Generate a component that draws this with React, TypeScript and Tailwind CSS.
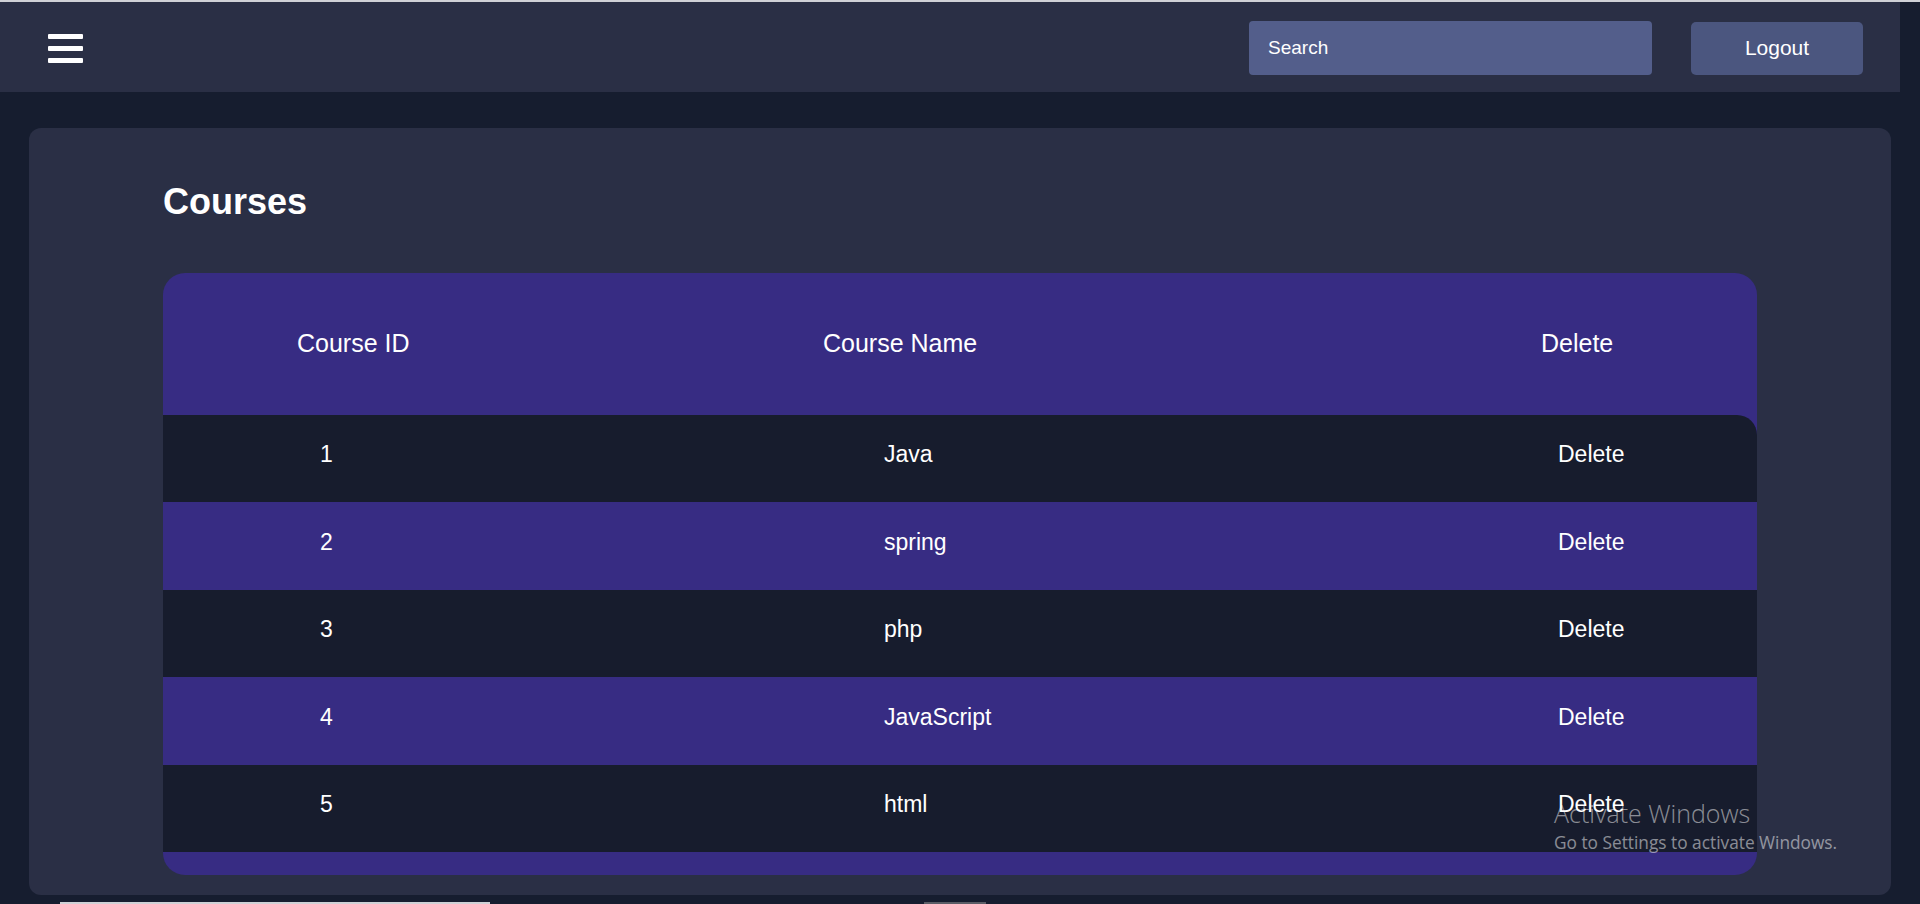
import React from 'react';

const courses = [
  { id: 1, name: 'Java' },
  { id: 2, name: 'spring' },
  { id: 3, name: 'php' },
  { id: 4, name: 'JavaScript' },
  { id: 5, name: 'html' },
];

function MenuIcon() {
  return (
    <svg width="35" height="29" viewBox="0 0 35 29" fill="#ffffff">
      <rect x="0" y="0" width="35" height="5" rx="1" />
      <rect x="0" y="12" width="35" height="5" rx="1" />
      <rect x="0" y="24" width="35" height="5" rx="1" />
    </svg>
  );
}

export default function App() {
  return (
    <div className="relative h-[904px] overflow-hidden bg-[#161d2f] font-['Liberation_Sans',Arial,sans-serif] text-white">
      {/* top edge */}
      <div className="h-[2px] bg-[#cfd1d6]" />

      {/* Navbar */}
      <header className="flex h-[90px] w-[1900px] items-center bg-[#2a2f45] pl-[48px] pr-[37px] pt-[2px]">
        <button className="flex items-center">
          <MenuIcon />
        </button>
        <input
          type="text"
          placeholder="Search"
          className="ml-auto h-[54px] w-[403px] rounded-[4px] bg-[#535e8b] pl-[19px] text-[19px] text-white placeholder:text-white focus:outline-none"
        />
        <button className="ml-[39px] h-[53px] w-[172px] rounded-[5px] bg-[#4b567f] text-[21px] text-white">
          Logout
        </button>
      </header>

      {/* Content card */}
      <main className="ml-[29px] mt-[36px] w-[1862px] rounded-xl bg-[#2a2f45] pb-[20px] pl-[134px] pt-[53px]">
        <h1 className="text-[36px] font-bold leading-[41px]">Courses</h1>

        <div className="mt-[51px] w-[1594px] overflow-hidden rounded-[22px] bg-[#372c83]">
          {/* head */}
          <div className="flex h-[142px] items-center pl-[134px] text-[25px]">
            <div className="w-[526px]">Course ID</div>
            <div className="w-[718px]">Course Name</div>
            <div>Delete</div>
          </div>

          {/* body */}
          {courses.map((c, i) => (
            <div
              key={c.id}
              className={
                'flex h-[87.4px] items-center pb-[8px] pl-[157px] text-[23px] ' +
                (i % 2 === 0 ? 'bg-[#171c2d] ' : 'bg-[#372c83] ') +
                (i === 0 ? 'rounded-tr-[20px]' : '')
              }
            >
              <div className="w-[564px]">{c.id}</div>
              <div className="w-[674px]">{c.name}</div>
              <button className="text-white">Delete</button>
            </div>
          ))}
          <div className="h-[23px]" />
        </div>
      </main>

      {/* scrollbar remnants */}
      <div className="mt-[7px] flex h-[2px]">
        <div className="ml-[60px] w-[430px] bg-[#cfd1d6]" />
        <div className="ml-[434px] w-[62px] bg-[#5a5d66]" />
      </div>

      {/* windows watermark */}
      <div className="pointer-events-none absolute left-[1554px] top-[801px] font-['Open_Sans','Noto_Sans',sans-serif] text-white/50">
        <div className="text-[25px] font-light leading-none">Activate Windows</div>
        <div className="mt-[8px] text-[17.3px] leading-none">Go to Settings to activate Windows.</div>
      </div>
    </div>
  );
}
